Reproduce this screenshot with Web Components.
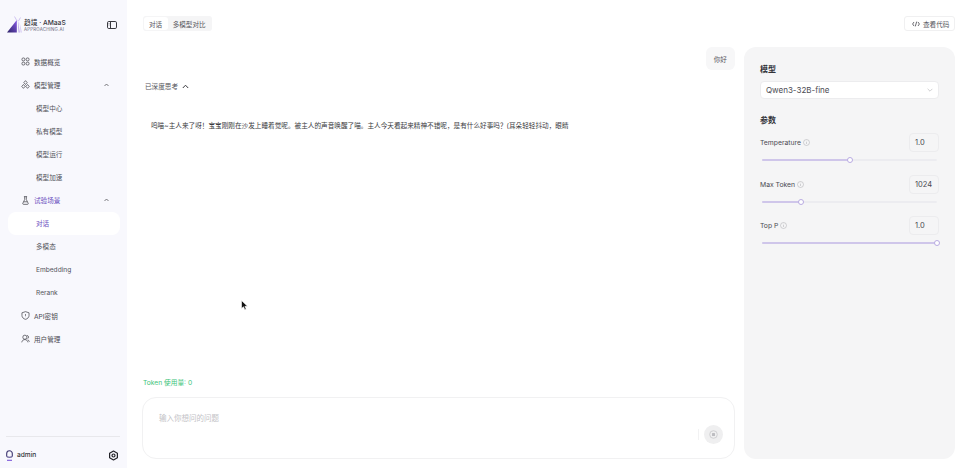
<!DOCTYPE html>
<html lang="zh">
<head>
<meta charset="utf-8">
<title>AMaaS</title>
<style>
    html, body { margin: 0; height: 468px; overflow: hidden; background: #fff; }
    body { font-family: Inter, "Noto Sans CJK SC", sans-serif; color: #3a3a3f; }
</style>
</head>
<body>
<app-shell>
    <side-bar slot="side">
        <nav-item icon="grid">数据概览</nav-item>
        <nav-item icon="cubes" caret>模型管理</nav-item>
        <nav-item sub>模型中心</nav-item>
        <nav-item sub>私有模型</nav-item>
        <nav-item sub>模型运行</nav-item>
        <nav-item sub>模型加速</nav-item>
        <nav-item icon="flask" caret accent>试验场景</nav-item>
        <nav-item sub active>对话</nav-item>
        <nav-item sub>多模态</nav-item>
        <nav-item sub latin>Embedding</nav-item>
        <nav-item sub latin>Rerank</nav-item>
        <nav-item icon="shield">API密钥</nav-item>
        <nav-item icon="users">用户管理</nav-item>
    </side-bar>
    <top-bar slot="top"></top-bar>
    <chat-panel slot="chat"></chat-panel>
    <settings-panel slot="settings">
        <param-slider label="Temperature" value="1.0" percent="50"></param-slider>
        <param-slider label="Max Token" value="1024" percent="22.5"></param-slider>
        <param-slider label="Top P" value="1.0" percent="100"></param-slider>
    </settings-panel>
</app-shell>

<script>
const ICONS = {
    grid: `<rect x="1.5" y="1.5" width="4.5" height="4.5" rx="1.8"/><rect x="8" y="1.5" width="4.5" height="4.5" rx="1.8"/><rect x="1.5" y="8" width="4.5" height="4.5" rx="1.8"/><rect x="8" y="8" width="4.5" height="4.5" rx="1.8"/>`,
    cubes: `<path d="M7 1 9.6 4 7 7 4.4 4Z"/><path d="M3.8 7 6.4 10 3.8 13 1.2 10Z"/><path d="M10.2 7 12.8 10 10.2 13 7.6 10Z"/>`,
    flask: `<path d="M4.5 1h5M5.7 1v4.5L2.8 11.4c-.3.8.1 1.600.9 1.600h6.600c.8 0 1.200-.8.900-1.600L8.300 5.500V1M4.300 9h5.400"/>`,
    shield: `<path d="M7 1 12.500 2.800v4.200c0 3-2.300 5.100-5.500 6C3.800 12.100 1.500 10 1.500 7V2.800Z"/><path d="M7 4.800v2.700M7 9v.5"/>`,
    users: `<circle cx="6" cy="5" r="3.200"/><path d="M1.200 13c.5-2.900 2.400-4.300 4.800-4.300s4.300 1.400 4.800 4.300M9.500 2c1.400.4 2.200 1.600 2.200 2.900s-.7 2.200-1.700 2.700M10.800 9.200c1.200.5 2 1.600 2.300 2.900"/>`
}

class AppShell extends HTMLElement {
    constructor() {
        super()
        this.attachShadow({ mode: "open" })
        this.shadowRoot.innerHTML = `
            <style>
                :host { display: grid; grid-template-columns: 127px 1fr; width: 968px; height: 468px; position: relative; }
                .main { display: grid; grid-template-rows: 47px 1fr; grid-template-columns: 1fr 211px; column-gap: 9px; padding: 0 13px 9px 15px; min-width: 0; }
                .top { grid-column: 1 / -1; }
                .cursor { position: absolute; left: 241px; top: 300px; }
            </style>
            <slot name="side"></slot>
            <div class="main">
                <div class="top"><slot name="top"></slot></div>
                <slot name="chat"></slot>
                <slot name="settings"></slot>
            </div>
            <svg class="cursor" width="7" height="11" viewBox="0 0 7 11"><path d="M.5.5v8l2-1.700 1.300 3 1.400-.6-1.300-2.900h2.600Z" fill="#111" stroke="#fff" stroke-width=".6"/></svg>
        `
    }
}

class SideBar extends HTMLElement {
    constructor() {
        super()
        this.attachShadow({ mode: "open" })
        this.shadowRoot.innerHTML = `
            <style>
                :host { display: flex; flex-direction: column; height: 468px; box-sizing: border-box; background: #f8f8fd; padding: 0 7px 0 6px; }
                .brand { display: flex; align-items: center; height: 50px; padding-left: 1px; flex: none; }
                .logo { margin-top: -1px; }
                .name { display: flex; flex-direction: column; margin-left: 0; margin-top: 2px; }
                .name b { font-size: 6.7px; font-weight: 500; color: #36363c; line-height: 8px; white-space: nowrap; }
                .name i { font-style: normal; font-size: 4.4px; color: #66667a; line-height: 6px; letter-spacing: .2px; }
                .collapse { margin-left: auto; margin-right: 3px; }
                .nav { flex: 1; display: flex; flex-direction: column; }
                .foot { border-top: 1px solid #e8e8ec; height: 32px; display: flex; align-items: center; padding-top: 5px; flex: none; box-sizing: border-box; }
                .foot span { font-size: 6.6px; font-weight: 500; color: #33333a; margin-left: 4px; }
                .gear { margin-left: auto; margin-right: 1px; }
            </style>
            <div class="brand">
                <svg class="logo" width="17" height="17" viewBox="0 0 17 17">
                    <defs><linearGradient id="mark" x1="0" y1="1" x2="1" y2="0"><stop offset="0" stop-color="#2b2166"/><stop offset="1" stop-color="#8a5ce8"/></linearGradient></defs>
                    <path d="M0 16.500 9.800 4v12.500Z" fill="url(#mark)"/>
                    <path d="M10.800 3l.7 13.500h1.300Z" fill="#b9a4ea"/>
                    <path d="M12.500 6l1 10.500h1.500Z" fill="#d9cff4"/>
                    <path d="M7.500.5 10 5M13.500 1.500 11.500 5" stroke="#c6b8ee" stroke-width=".8" fill="none"/>
                </svg>
                <div class="name"><b>趋境 · AMaaS</b><i>APPROACHING.AI</i></div>
                <svg class="collapse" width="10" height="8" viewBox="0 0 10 8" fill="none" stroke="#3a3a40" stroke-width="1"><rect x=".5" y=".5" width="9" height="7" rx="1.3"/><path d="M3.5.5v7"/><path d="M1.500 2.500h1M1.500 4h1" stroke-width=".6"/></svg>
            </div>
            <div class="nav"><slot></slot></div>
            <div class="foot">
                <svg width="7" height="11" viewBox="0 0 7 11" fill="none" stroke-width="1.1"><path d="M.7 6.500V3.500a2.800 2.800 0 0 1 5.600 0v3" stroke="#3c3570"/><path d="M.7 6.500c.6 1 5 1 5.600 0" stroke="#4a3f86"/><path d="M1 10.300h5" stroke="#7a55d8"/></svg>
                <span>admin</span>
                <svg class="gear" width="11" height="11" viewBox="0 0 11 11" fill="none" stroke="#222228" stroke-width="1.2"><path d="M5.500 1 9.400 3.200v4.600L5.500 10 1.600 7.800V3.200Z" stroke-linejoin="round"/><circle cx="5.500" cy="5.500" r="1.500"/></svg>
            </div>
        `
    }
}

class NavItem extends HTMLElement {
    constructor() {
        super()
        this.attachShadow({ mode: "open" })
    }

    connectedCallback() {
        const icon = this.getAttribute("icon")
        this.shadowRoot.innerHTML = `
            <style>
                :host { display: flex; align-items: center; height: 23.1px; flex: none; box-sizing: border-box; font-size: 6.6px; color: #4a4a52; padding-left: 15px; padding-right: 11px; }
                :host([sub]) { padding-left: 30px; color: #52525a; }
                :host([latin]) { padding-top: 2px; }
                :host([accent]) { color: #6a4fc0; }
                :host([active]) { color: #6a4fc0; background: #fff; border-radius: 8px; margin-left: 2px; padding-left: 28px; }
                svg.icon { width: 9px; height: 9px; margin-right: 4px; fill: none; stroke: #3f3f46; stroke-width: 1.1; flex: none; }
                svg.caret { margin-left: auto; width: 5px; height: 4px; }
            </style>
            ${icon ? `<svg class="icon" viewBox="0 0 14 14">${ICONS[icon]}</svg>` : ""}
            <slot></slot>
            ${this.hasAttribute("caret") ? `<svg class="caret" viewBox="0 0 5 4" fill="none" stroke="#55555c" stroke-width=".8"><path d="M.5 3 2.500 1l2 2"/></svg>` : ""}
        `
    }
}

class TopBar extends HTMLElement {
    constructor() {
        super()
        this.attachShadow({ mode: "open" })
        this.shadowRoot.innerHTML = `
            <style>
                :host { display: flex; justify-content: space-between; align-items: flex-start; padding: 16px 0 0 1px; font-size: 6.6px; color: #55555c; }
                .tabs { display: flex; background: #f5f5f6; border-radius: 3px; height: 15px; padding: 1px; box-sizing: border-box; }
                .tabs span { display: flex; align-items: center; padding: 0 5px; }
                .tabs .on { background: #fff; border-radius: 3px; padding: 0 5.500px 0 5px; }
                .code { display: flex; align-items: center; gap: 3px; height: 15px; width: 51px; box-sizing: border-box; padding-left: 7px; border: 1px solid #f0f0f1; border-radius: 3px; }
            </style>
            <div class="tabs"><span class="on">对话</span><span>多模型对比</span></div>
            <div class="code">
                <svg width="8" height="6" viewBox="0 0 8 6" fill="none" stroke="#45454c" stroke-width=".8"><path d="M2 1 .6 3 2 5M6 1l1.400 2L6 5M4.700.6 3.300 5.400"/></svg>
                <span>查看代码</span>
            </div>
        `
    }
}

class ChatPanel extends HTMLElement {
    constructor() {
        super()
        this.attachShadow({ mode: "open" })
        this.shadowRoot.innerHTML = `
            <style>
                :host { display: flex; flex-direction: column; min-width: 0; font-size: 6.64px; color: #3f3f46; }
                .user { align-self: flex-end; display: flex; align-items: center; height: 23px; padding: 0 8px; background: #f7f7f8; border-radius: 6px; color: #55555c; }
                .think { display: flex; align-items: center; gap: 4px; margin: 10px 0 0 3px; height: 12px; color: #55555c; }
                .answer { margin: 27.5px 0 0 9px; height: 12px; line-height: 12px; white-space: nowrap; color: #3a3a40; }
                .token { margin: auto 0 0 1px; height: 12px; line-height: 12px; color: #3cc47a; font-size: 6.7px; }
                .box { display: flex; flex-direction: column; height: 62px; margin-top: 8px; box-sizing: border-box; border: 1px solid #f1f1f2; border-radius: 14px; padding: 14px 11px 0 16px; color: #c2c2c6; font-size: 7.5px; }
                .ctl { display: flex; align-items: center; justify-content: flex-end; gap: 5px; margin-top: 2px; }
                .ctl i { display: block; width: 1px; height: 11px; background: #f2f2f3; }
                .stop { display: flex; align-items: center; justify-content: center; width: 19px; height: 19px; border-radius: 50%; background: #efeff0; }
            </style>
            <div class="user">你好</div>
            <div class="think">已深度思考
                <svg width="7" height="5" viewBox="0 0 7 5" fill="none" stroke="#3a3a40" stroke-width="1"><path d="M.8 4 3.500 1.200 6.200 4"/></svg>
            </div>
            <div class="answer">呜喵~主人来了呀！宝宝刚刚在沙发上睡着觉呢。被主人的声音唤醒了喵。主人今天看起来精神不错呢，是有什么好事吗？(耳朵轻轻抖动，眼睛</div>
            <div class="token">Token 使用量: 0</div>
            <div class="box">
                <span>输入你想问的问题</span>
                <div class="ctl">
                    <i></i>
                    <div class="stop"><svg width="9" height="9" viewBox="0 0 9 9"><circle cx="4.500" cy="4.500" r="3.800" fill="none" stroke="#c9c9cc" stroke-width=".8"/><rect x="3" y="3" width="3" height="3" rx=".5" fill="#bdbdc1"/></svg></div>
                </div>
            </div>
        `
    }
}

class SettingsPanel extends HTMLElement {
    constructor() {
        super()
        this.attachShadow({ mode: "open" })
        this.shadowRoot.innerHTML = `
            <style>
                :host { display: flex; flex-direction: column; background: #f5f5f6; border-radius: 12px; padding: 16px 16px 0; box-sizing: border-box; }
                h3 { margin: 0; font-size: 8px; font-weight: 600; line-height: 12px; color: #33333a; }
                .select { display: flex; align-items: center; justify-content: space-between; height: 18px; margin: 6px 0 15px; box-sizing: border-box; padding: 0 5px; background: #fff; border: 1px solid #ececee; border-radius: 4px; font-size: 8px; color: #4a4a52; }
                .params { display: flex; flex-direction: column; gap: 13.5px; margin-top: 7px; }
            </style>
            <h3>模型</h3>
            <div class="select"><span>Qwen3-32B-fine</span>
                <svg width="6" height="4" viewBox="0 0 6 4" fill="none" stroke="#bcbcc0" stroke-width=".7"><path d="M.6.8 3 3.200 5.400.8"/></svg>
            </div>
            <h3>参数</h3>
            <div class="params"><slot></slot></div>
        `
    }
}

class ParamSlider extends HTMLElement {
    constructor() {
        super()
        this.attachShadow({ mode: "open" })
    }

    connectedCallback() {
        const percent = this.getAttribute("percent")
        this.shadowRoot.innerHTML = `
            <style>
                :host { display: block; font-size: 6.8px; color: #4a4a52; }
                .row { display: flex; align-items: center; gap: 2px; height: 19px; }
                .value { margin-left: auto; width: 30px; height: 19px; box-sizing: border-box; display: flex; align-items: center; padding-left: 5px; border: 1px solid #ececee; border-radius: 4px; font-size: 7.5px; color: #4a4a52; }
                .track { position: relative; height: 2px; margin: 7px 2px 0; background: #ececf0; border-radius: 1px; }
                .fill { height: 100%; width: ${percent}%; background: #cfc6ea; border-radius: 1px; }
                .thumb { position: absolute; top: -2px; left: ${percent}%; margin-left: -3px; width: 6px; height: 6px; box-sizing: border-box; background: #fff; border: 1px solid #b9abe2; border-radius: 50%; }
            </style>
            <div class="row">
                <span>${this.getAttribute("label")}</span>
                <svg width="7" height="7" viewBox="0 0 7 7" fill="none" stroke="#a9a9ae" stroke-width=".5"><circle cx="3.500" cy="3.500" r="3"/><path d="M3.500 3v2M3.500 1.800v.5"/></svg>
                <span class="value">${this.getAttribute("value")}</span>
            </div>
            <div class="track"><div class="fill"></div><div class="thumb"></div></div>
        `
    }
}

customElements.define("app-shell", AppShell)
customElements.define("side-bar", SideBar)
customElements.define("nav-item", NavItem)
customElements.define("top-bar", TopBar)
customElements.define("chat-panel", ChatPanel)
customElements.define("settings-panel", SettingsPanel)
customElements.define("param-slider", ParamSlider)
</script>
</body>
</html>
